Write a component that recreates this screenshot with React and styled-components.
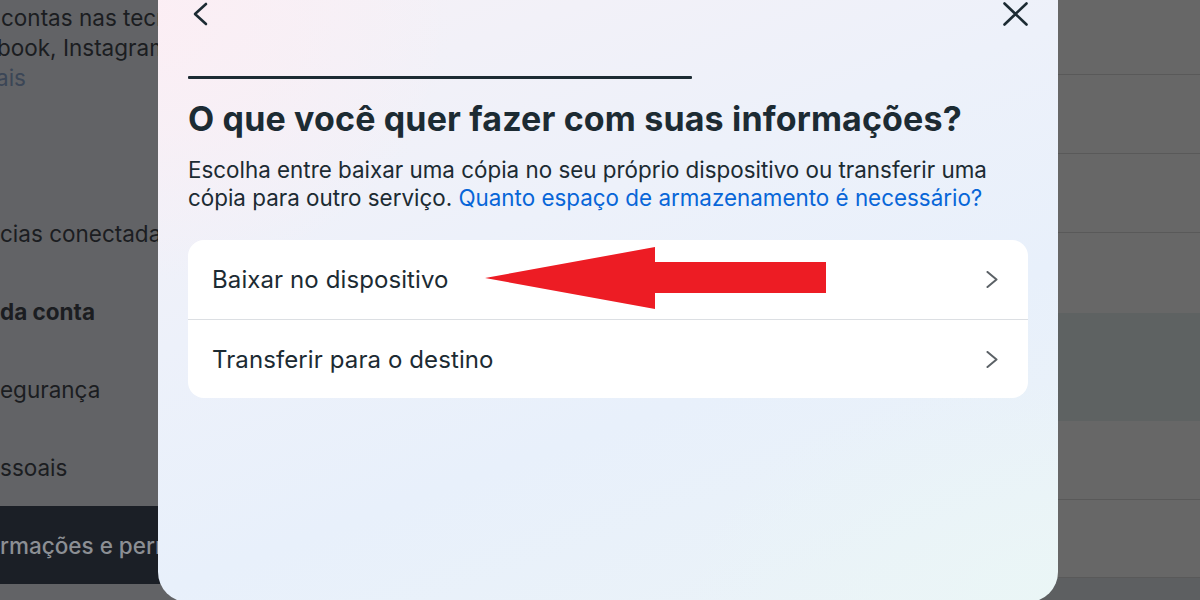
import React from "react";
import styled, { createGlobalStyle } from "styled-components";

const Global = createGlobalStyle`
  html, body { margin: 0; padding: 0; }
  body { overflow: hidden; font-family: Inter, "Noto Sans", sans-serif; }
  * { box-sizing: border-box; }
`;

const Page = styled.div`
  position: relative;
  width: 1200px;
  height: 600px;
  overflow: hidden;
  display: flex;
  background: #646467;
`;

const Sidebar = styled.aside`
  flex: 0 0 380px;
  display: flex;
  flex-direction: column;
  background: #626366;
  color: #1b1d21;
  font-size: 22.5px;
`;

const Intro = styled.p`
  margin: 3px 0 101px;
  line-height: 30px;
  white-space: nowrap;
`;

const IntroLine = styled.span`
  display: block;
  margin-left: ${(p) => p.$shift || 0}px;
  color: ${(p) => (p.$link ? "#3b4656" : "inherit")};
`;

const NavItem = styled.div`
  height: 78px;
  display: flex;
  align-items: center;
  white-space: nowrap;
  padding-left: ${(p) => p.$shift || 0}px;
  font-weight: ${(p) => (p.$heading ? 700 : 400)};
  background: ${(p) => (p.$active ? "#1b1f26" : "transparent")};
  color: ${(p) => (p.$active ? "#8c8f94" : "inherit")};
  ${(p) => p.$active && "font-weight: 500;"}
`;

const Main = styled.main`
  flex: 1;
  display: flex;
  flex-direction: column;
  background: #676767;
`;

const MainRow = styled.div`
  flex: 0 0 ${(p) => p.$h}px;
  background: ${(p) => p.$bg || "#676767"};
  border-bottom: ${(p) => (p.$line ? "1px solid #595959" : "none")};
`;

const Modal = styled.div`
  position: absolute;
  left: 158px;
  top: -36px;
  width: 900px;
  height: 638px;
  border-radius: 30px;
  padding: 24px 30px 0 30px;
  display: flex;
  flex-direction: column;
  color: #1c2b33;
  background:
    radial-gradient(ellipse 420px 380px at 0% 8%, rgba(252, 238, 244, 0.9), rgba(252, 238, 244, 0) 70%),
    radial-gradient(ellipse 500px 300px at 100% 100%, rgba(234, 246, 246, 0.95), rgba(234, 246, 246, 0) 75%),
    linear-gradient(160deg, #f7f1f6 0%, #edf1fa 40%, #e8f0fb 65%, #ebf3f7 100%);
`;

const Header = styled.div`
  height: 52px;
  display: flex;
  align-items: center;
  justify-content: space-between;
`;

const IconButton = styled.button`
  border: 0;
  background: none;
  padding: 0;
  margin: 0 ${(p) => p.$mr || 0}px 0 ${(p) => p.$ml || 0}px;
  display: flex;
  align-items: center;
  color: #1c2b33;
  cursor: pointer;
`;

const Progress = styled.div`
  margin-top: 36px;
  width: 504px;
  height: 3px;
  background: #1c2b33;
  border-radius: 1px;
`;

const Title = styled.h1`
  margin: 20px 0 0;
  font-size: 34px;
  line-height: 40px;
  font-weight: 700;
  letter-spacing: 0.15px;
  white-space: nowrap;
`;

const Description = styled.p`
  margin: 17px 0 0;
  font-size: 22.4px;
  line-height: 28px;
  font-weight: 400;
`;

const Link = styled.a`
  color: #0866d8;
  text-decoration: none;
`;

const Card = styled.div`
  margin-top: 28px;
  background: #ffffff;
  border-radius: 16px;
  display: flex;
  flex-direction: column;
`;

const OptionRow = styled.div`
  position: relative;
  height: ${(p) => p.$h}px;
  display: flex;
  align-items: center;
  justify-content: space-between;
  padding: 0 30px 0 24px;
  font-size: 24px;
  letter-spacing: 0.1px;
  border-bottom: ${(p) => (p.$divider ? "1.5px solid #dcdfe3" : "none")};
  cursor: pointer;
`;

const Arrow = styled.svg`
  position: absolute;
  left: 297px;
  top: 7px;
`;

const BackIcon = () => (
  <svg width="16" height="24" viewBox="0 0 16 24">
    <path d="M14 2 L3 12 L14 22" fill="none" stroke="currentColor" strokeWidth="2.6" strokeLinecap="round" strokeLinejoin="round" />
  </svg>
);

const CloseIcon = () => (
  <svg width="25" height="24" viewBox="0 0 25 24">
    <path d="M1.5 1.5 L23.5 22.5 M23.5 1.5 L1.5 22.5" fill="none" stroke="currentColor" strokeWidth="2.6" strokeLinecap="round" />
  </svg>
);

const Chevron = () => (
  <svg width="12" height="17" viewBox="0 0 12 17">
    <path d="M1.5 1 L10.5 8.5 L1.5 16" fill="none" stroke="#5b6166" strokeWidth="2" strokeLinecap="round" strokeLinejoin="round" />
  </svg>
);

export default function App() {
  return (
    <>
      <Global />
      <Page>
        <Sidebar>
          <Intro>
            <IntroLine $shift={1}>contas nas tecnologias</IntroLine>
            <IntroLine $shift={-3}>book, Instagram</IntroLine>
            <IntroLine $shift={-4} $link>ais</IntroLine>
          </Intro>
          <NavItem $shift={0}>cias conectadas</NavItem>
          <NavItem $heading $shift={0}>da conta</NavItem>
          <NavItem $shift={-4}>egurança</NavItem>
          <NavItem $shift={0}>ssoais</NavItem>
          <NavItem $active $shift={0}>rmações e permissões</NavItem>
        </Sidebar>
        <Main>
          <MainRow $h={75} $line />
          <MainRow $h={79} $line />
          <MainRow $h={79} $line />
          <MainRow $h={80} />
          <MainRow $h={108} $bg="#5e6262" />
          <MainRow $h={79} $line />
          <MainRow $h={78} $line />
          <MainRow $h={40} $bg="#5d5f61" />
        </Main>

        <Modal role="dialog">
          <Header>
            <IconButton $ml={4} aria-label="Voltar"><BackIcon /></IconButton>
            <IconButton $mr={0} aria-label="Fechar"><CloseIcon /></IconButton>
          </Header>
          <Progress />
          <Title>O que você quer fazer com suas informações?</Title>
          <Description>
            Escolha entre baixar uma cópia no seu próprio dispositivo ou transferir uma cópia para outro serviço.{" "}
            <Link href="#">Quanto espaço de armazenamento é necessário?</Link>
          </Description>
          <Card>
            <OptionRow $h={80} $divider>
              <span>Baixar no dispositivo</span>
              <Chevron />
              <Arrow width="341" height="62" viewBox="0 0 341 62">
                <polygon points="0,31 170,0 170,15 341,15 341,46 170,46 170,62" fill="#ed1c24" />
              </Arrow>
            </OptionRow>
            <OptionRow $h={78}>
              <span>Transferir para o destino</span>
              <Chevron />
            </OptionRow>
          </Card>
        </Modal>
      </Page>
    </>
  );
}
